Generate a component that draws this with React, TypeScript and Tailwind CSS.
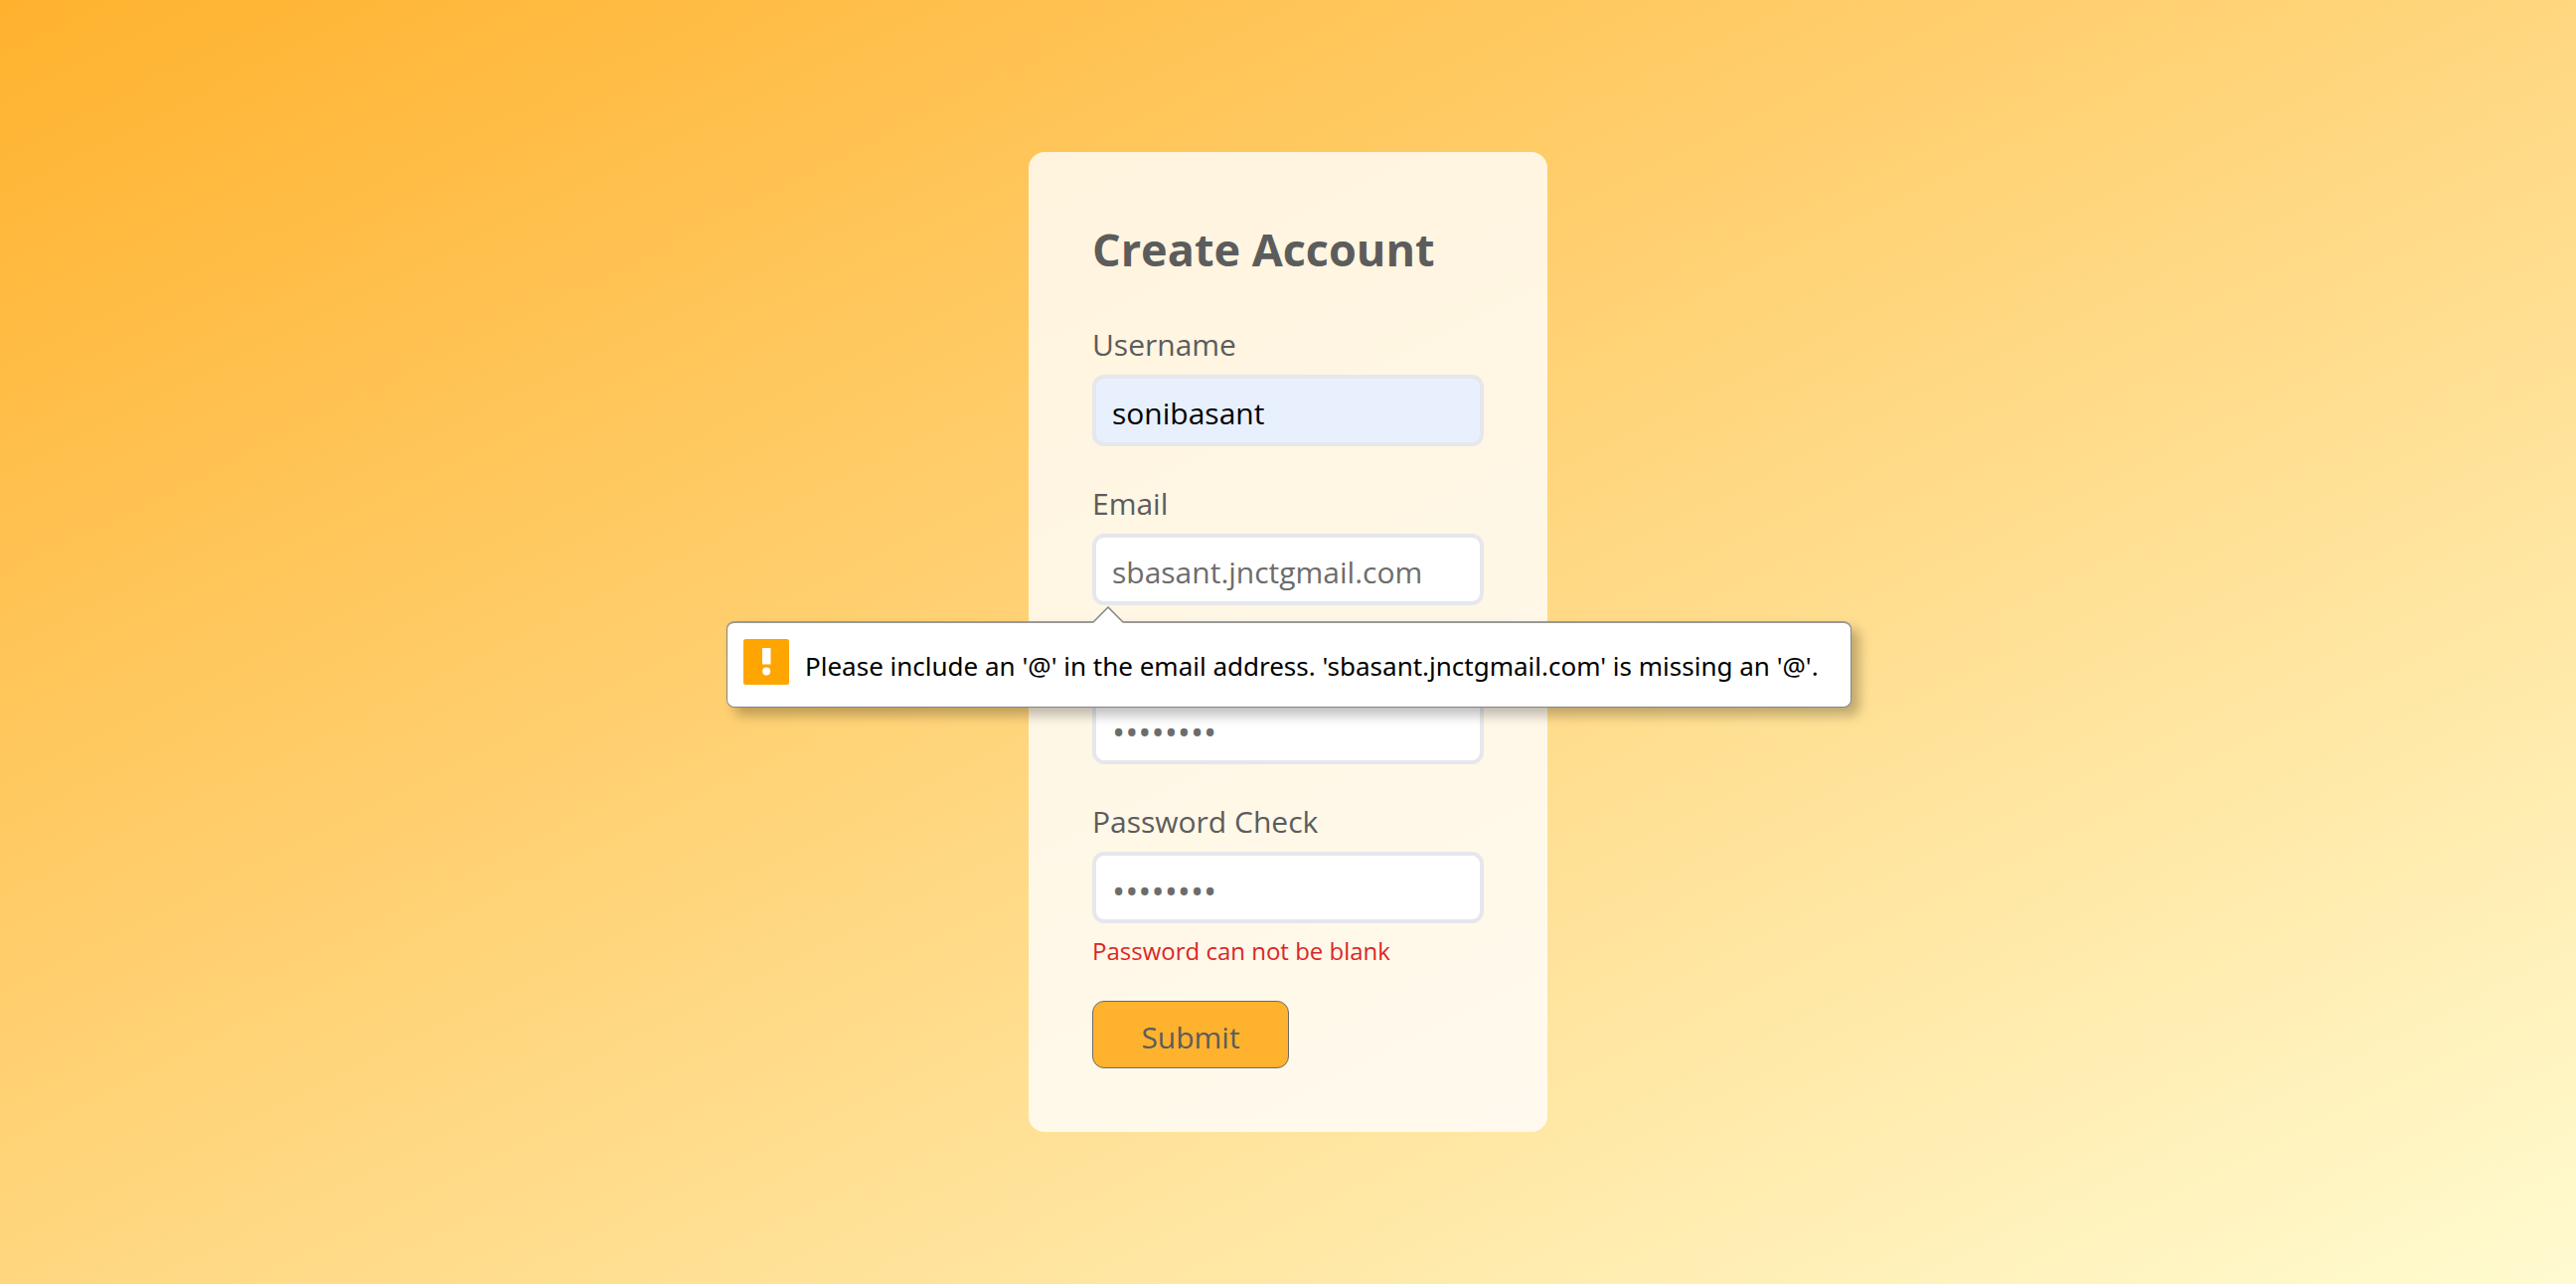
import React from "react";

type FieldProps = {
  id: string;
  label: string;
  type: string;
  value?: string;
  placeholder?: string;
  inputClass?: string;
  labelClass?: string;
  error?: string;
  children?: React.ReactNode;
};

function Field({ id, label, type, value, placeholder, inputClass = "", labelClass = "", error, children }: FieldProps) {
  return (
    <div className="flex flex-col">
      <label htmlFor={id} className={`mb-1.5 text-[30px] leading-[48px] ${labelClass}`}>
        {label}
      </label>
      <div className="relative">
        <input
          id={id}
          type={type}
          defaultValue={value}
          placeholder={placeholder}
          className={`block h-18 w-full rounded-xl border-4 border-gray-200 px-4 text-[30px] outline-none placeholder:text-[35px] placeholder:text-[#6c6c6c] ${inputClass}`}
        />
        {children}
      </div>
      {error && <p className="mt-3 text-2xl leading-8 text-[#dc2626]">{error}</p>}
    </div>
  );
}

function ValidationBubble({ message }: { message: string }) {
  return (
    <div
      role="alert"
      className="absolute top-full -left-92 z-10 mt-4 flex w-max items-start gap-4 rounded-lg border border-t-2 border-[#858585] border-t-[#999999] bg-white pt-4 pr-8 pb-3.5 pl-4 text-black shadow-[8px_8px_12px_rgba(0,0,0,0.25)]"
    >
      <svg className="absolute -top-[17px] left-[367px]" width="32" height="18" viewBox="0 0 32 18" aria-hidden="true">
        <path d="M0 18 L0.5 16.5 L16 1 L31.5 16.5 L32 18 Z" fill="#ffffff" />
        <path d="M0.5 16.5 L16 1 L31.5 16.5" fill="none" stroke="#858585" strokeWidth="1.5" />
      </svg>
      <svg width="46" height="46" viewBox="0 0 46 46" aria-hidden="true">
        <rect width="46" height="46" rx="2.5" fill="#ffa500" />
        <rect x="19" y="9" width="8.5" height="16.5" fill="#ffffff" />
        <circle cx="23.2" cy="32.5" r="4" fill="#ffffff" />
      </svg>
      <span className="font-['Noto_Sans','Open_Sans',sans-serif] text-[26px] leading-[54px]">{message}</span>
    </div>
  );
}

export default function App() {
  return (
    <main className="flex min-h-screen items-center justify-center bg-[linear-gradient(to_bottom_right,#ffb22e,#fffbd0)] font-['Open_Sans','Noto_Sans',sans-serif] text-[#5c5c5c]">
      <form
        noValidate
        onSubmit={(e) => e.preventDefault()}
        className="flex w-full max-w-[522px] flex-col gap-[34px] rounded-2xl bg-white/80 p-16"
      >
        <h1 className="mb-1 text-[45px] leading-[68px] font-bold">Create Account</h1>
        <Field id="username" label="Username" type="text" value="sonibasant" inputClass="bg-[#e8f0fe] pt-1 text-black" />
        <Field
          id="email"
          label="Email"
          type="email"
          value="sbasant.jnctgmail.com"
          inputClass="bg-white pt-1 text-[#6c6c6c]"
        >
          <ValidationBubble message="Please include an '@' in the email address. 'sbasant.jnctgmail.com' is missing an '@'." />
        </Field>
        <Field
          id="password"
          label="Password"
          type="password"
          placeholder="••••••••"
          inputClass="bg-white pt-2.5"
          labelClass="invisible"
        />
        <Field
          id="password-check"
          label="Password Check"
          type="password"
          placeholder="••••••••"
          inputClass="bg-white pt-2.5"
          error="Password can not be blank"
        />
        <button
          type="submit"
          className="h-[68px] w-[198px] rounded-xl border border-[#6c6c6c] bg-[#ffb22e] pt-1 text-[30px]"
        >
          Submit
        </button>
      </form>
    </main>
  );
}
